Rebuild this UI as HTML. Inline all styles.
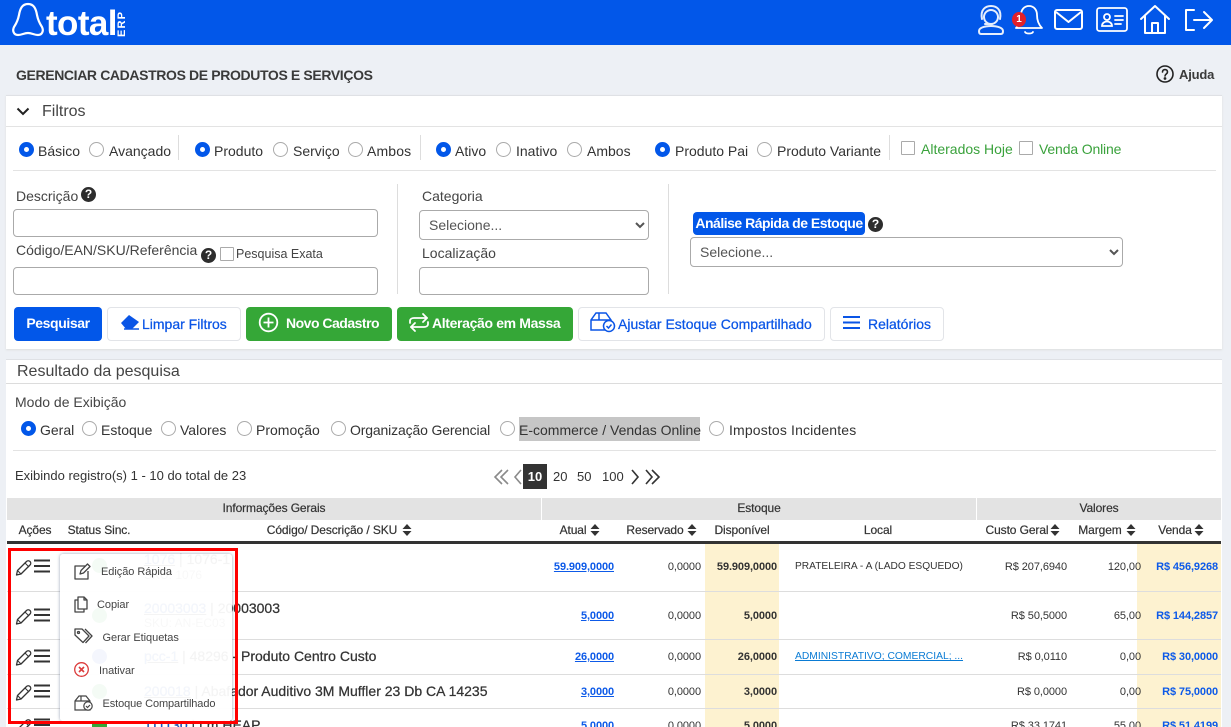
<!DOCTYPE html>
<html lang="pt-BR"><head><meta charset="utf-8"><title>Gerenciar Cadastros</title>
<style>
html,body{margin:0;padding:0;width:1231px;height:727px;overflow:hidden;background:#edf0f5;font-family:"Liberation Sans",Arial,sans-serif;color:#333;font-size:14px}
#p{position:relative;width:1231px;height:727px;overflow:hidden}
.a{position:absolute}
.t{position:absolute;white-space:nowrap;line-height:20px;height:20px}
.rt{position:absolute;white-space:nowrap;line-height:20px;height:20px;text-align:right;font-size:11px;letter-spacing:-.08px}
.c{position:absolute;white-space:nowrap;line-height:20px;height:20px;text-align:center;font-size:12px;letter-spacing:-.1px;transform:translateX(-50%);-webkit-text-stroke:.2px #333}
.r{position:absolute;width:15px;height:15px;border:1px solid #aaa;border-radius:50%;background:#fff;box-sizing:border-box}
.r.on{background:#0257e9;border-color:#0257e9}
.r.on:after{content:"";position:absolute;left:4px;top:4px;width:5px;height:5px;border-radius:50%;background:#fff}
.k{position:absolute;width:14px;height:14px;border:1px solid #aaa;border-radius:1px;background:#fff;box-sizing:border-box}
.i{position:absolute;box-sizing:border-box;border:1px solid #aaa;border-radius:4px;background:#fff;margin:0;padding:0 9px;height:28px}
select.i{font:14px "Liberation Sans",Arial,sans-serif;color:#555;padding-left:5px}
.b{position:absolute;top:307px;height:34px;box-sizing:border-box;border-radius:4px;line-height:32px;white-space:nowrap;font-size:14px;font-weight:bold;letter-spacing:-.4px}
.bl{background:#fff;border:1px solid #e2e4e8;color:#0a55e6;font-weight:normal;letter-spacing:0;-webkit-text-stroke:.25px #0a55e6}
.gr{background:#35a737;color:#fff}
.v{position:absolute;width:1px;background:#ddd}
.h{position:absolute;height:1px;background:#ddd}
.lk{color:#0d5ae8;text-decoration:underline;font-weight:bold;letter-spacing:-.1px}
.help{position:absolute;width:15px;height:15px;border-radius:50%;background:#2d2d2d;color:#fff;font:bold 12px/15px "Liberation Sans",Arial,sans-serif;text-align:center}
.yl{position:absolute;background:#fdf2d0}
svg{position:absolute;overflow:visible}
.m{position:absolute;white-space:nowrap;font-size:11px;line-height:16px;color:#444;letter-spacing:-.05px}
.code{font-size:14px;-webkit-text-stroke:.25px #333}
.code span{color:#0d5ae8;text-decoration:underline}
</style></head><body><div id="p">

<!-- Header -->
<div class="a" style="left:0;top:0;width:1231px;height:45px;background:#0257e9"></div>
<svg style="left:0;top:0" width="130" height="45" fill="none" stroke="#fff" stroke-width="2.2" stroke-linejoin="round" stroke-linecap="round">
<path d="M28 4c-6 0-8 5-9 11-1 5-3 9-5 12-2 4 0 8 4 8 4 0 6-2 10-2s6 2 10 2c4 0 6-4 4-8-2-3-4-7-5-12-1-6-3-11-9-11z"/>
</svg>
<div class="t" style="left:46px;top:12px;color:#fff;font-weight:bold;font-size:35px;line-height:24px;height:24px;letter-spacing:-.6px">total</div>
<div class="t" style="left:110px;top:19px;color:#fff;font-weight:bold;font-size:11px;line-height:12px;height:12px;transform:rotate(-90deg);width:24px;text-align:center;letter-spacing:1.2px">ERP</div>

<svg style="left:976px;top:3px" width="30" height="34" fill="none" stroke="#e6eefc" stroke-width="2" stroke-linecap="round">
<circle cx="15" cy="14" r="7"/><path d="M6 16c-2-10 4-13 9-13s11 3 9 13"/><path d="M9 21h7"/><path d="M5 31c-2 0-2-2-2-3 0-3 5-5 12-5s12 2 12 5c0 1 0 3-2 3z"/>
</svg>
<svg style="left:1014px;top:4px" width="30" height="32" fill="none" stroke="#fff" stroke-width="1.8" stroke-linecap="round" stroke-linejoin="round">
<path d="M15 2c-5 0-8 4-8 9 0 6-2 10-5 13h26c-3-3-5-7-5-13 0-5-3-9-8-9z"/><path d="M11 28c1 2 7 2 8 0"/>
</svg>
<div class="a" style="left:1012px;top:12px;width:14px;height:15px;border-radius:50%;background:#e1202a;color:#fff;font:bold 10px/15px 'Liberation Sans',sans-serif;text-align:center">1</div>
<svg style="left:1054px;top:9px" width="30" height="22" fill="none" stroke="#fff" stroke-width="2" stroke-linejoin="round">
<rect x="1" y="1" width="27" height="19" rx="2"/><path d="M2 3l12.500 10L27 3"/>
</svg>
<svg style="left:1096px;top:7px" width="33" height="26" fill="none" stroke="#fff" stroke-width="1.8" stroke-linecap="round">
<rect x="1" y="1" width="30" height="23" rx="2.500"/><circle cx="11" cy="10" r="3"/><path d="M6 19c0-6 10-6 10 0z"/><path d="M19 9h8M19 13h8M19 17h6"/>
</svg>
<svg style="left:1139px;top:4px" width="32" height="31" fill="none" stroke="#fff" stroke-width="2" stroke-linejoin="round" stroke-linecap="round">
<path d="M2 15L16 2l14 13"/><path d="M6 12v17h20V12"/><path d="M13 29V19h6v10"/>
</svg>
<svg style="left:1184px;top:8px" width="30" height="24" fill="none" stroke="#fff" stroke-width="2" stroke-linecap="round" stroke-linejoin="round">
<path d="M10 2H2v20h8"/><path d="M10 12h18M20 4l8 8-8 8"/>
</svg>

<!-- Title -->
<div class="t" style="left:16px;top:65px;font-size:14px;font-weight:bold;color:#3a3a3a;letter-spacing:-.37px">GERENCIAR CADASTROS DE PRODUTOS E SERVIÇOS</div>
<svg style="left:1156px;top:65px" width="19" height="19" fill="none" stroke="#222" stroke-width="1.600"><circle cx="9" cy="9" r="8"/><path d="M6.500 7c0-3.300 5-3.300 5 0 0 2-2.500 2-2.500 4" stroke-linecap="round"/><circle cx="9" cy="13.500" r=".6" fill="#222"/></svg>
<div class="t" style="left:1179px;top:65px;font-size:13px;font-weight:bold;color:#3a3a3a;letter-spacing:-.2px">Ajuda</div>

<!-- Filtros panel -->
<div class="a" style="left:6px;top:95px;width:1216px;height:254px;background:#fff;border-top:1px solid #dfe1e5;box-sizing:border-box;box-shadow:0 1px 2px #ddd"></div>
<div class="h" style="left:6px;top:126px;width:1216px;background:#e3e3e3"></div>
<svg style="left:16px;top:107px" width="14" height="9" fill="none" stroke="#222" stroke-width="2"><path d="M1.500 1.500L7 7l5.500-5.500"/></svg>
<div class="t" style="left:42px;top:102px;font-size:16px;color:#444">Filtros</div>

<span class="r on" style="left:19px;top:142px"></span><div class="t" style="left:38px;top:141px">Básico</div>
<span class="r" style="left:89px;top:142px"></span><div class="t" style="left:109px;top:141px">Avançado</div>
<div class="v" style="left:178px;top:135px;height:25px"></div>
<span class="r on" style="left:195px;top:142px"></span><div class="t" style="left:214px;top:141px">Produto</div>
<span class="r" style="left:273px;top:142px"></span><div class="t" style="left:293px;top:141px">Serviço</div>
<span class="r" style="left:348px;top:142px"></span><div class="t" style="left:367px;top:141px;letter-spacing:.15px">Ambos</div>
<div class="v" style="left:420px;top:135px;height:25px"></div>
<span class="r on" style="left:436px;top:142px"></span><div class="t" style="left:455px;top:141px">Ativo</div>
<span class="r" style="left:496px;top:142px"></span><div class="t" style="left:516px;top:141px">Inativo</div>
<span class="r" style="left:567px;top:142px"></span><div class="t" style="left:587px;top:141px">Ambos</div>
<span class="r on" style="left:655px;top:142px"></span><div class="t" style="left:675px;top:141px">Produto Pai</div>
<span class="r" style="left:757px;top:142px"></span><div class="t" style="left:777px;top:141px">Produto Variante</div>
<div class="v" style="left:889px;top:135px;height:25px"></div>
<span class="k" style="left:901px;top:141px"></span><div class="t" style="left:921px;top:139px;color:#3aa23c">Alterados Hoje</div>
<span class="k" style="left:1019px;top:141px"></span><div class="t" style="left:1039px;top:139px;color:#3aa23c;letter-spacing:-.15px">Venda Online</div>
<div class="h" style="left:13px;top:170px;width:1203px;background:#e3e3e3"></div>

<div class="t" style="left:16px;top:186px;color:#444">Descrição</div><span class="help" style="left:81px;top:187px">?</span>
<input class="i" style="left:13px;top:209px;width:365px">
<div class="t" style="left:16px;top:240px;color:#444">Código/EAN/SKU/Referência</div><span class="help" style="left:201px;top:248px">?</span>
<span class="k" style="left:220px;top:247px"></span><div class="t" style="left:236px;top:244px;font-size:12.500px;color:#444">Pesquisa Exata</div>
<input class="i" style="left:13px;top:267px;width:365px">
<div class="v" style="left:397px;top:184px;height:110px"></div>
<div class="t" style="left:422px;top:186px;color:#444">Categoria</div>
<select class="i" style="left:419px;top:210px;width:230px;height:30px"><option>Selecione...</option></select>
<div class="t" style="left:422px;top:243px;color:#444">Localização</div>
<input class="i" style="left:419px;top:267px;width:230px">
<div class="v" style="left:668px;top:184px;height:110px"></div>
<div class="a" style="left:693px;top:212px;width:172px;height:23px;background:#0257e9;border-radius:4px;color:#fff;font-weight:bold;font-size:14px;line-height:23px;text-align:center;letter-spacing:-.5px;white-space:nowrap">Análise Rápida de Estoque</div>
<span class="help" style="left:868px;top:217px">?</span>
<select class="i" style="left:690px;top:237px;width:433px;height:30px"><option>Selecione...</option></select>

<!-- Buttons -->
<div class="b" style="left:14px;width:88px;background:#0257e9;color:#fff;text-align:center">Pesquisar</div>
<div class="b bl" style="left:107px;width:134px;padding-left:34px">Limpar Filtros</div>
<svg style="left:120px;top:314px" width="20" height="17"><path d="M1 9l8-8 10 7-7 7H6z" fill="#0a55e6"/><path d="M4 15h15" stroke="#0a55e6" stroke-width="1.500"/></svg>
<div class="b gr" style="left:246px;width:146px;padding-left:40px;letter-spacing:-.5px">Novo Cadastro</div>
<svg style="left:258px;top:312px" width="21" height="21" fill="none" stroke="#fff" stroke-width="1.800"><circle cx="10.500" cy="10.500" r="8.800"/><path d="M10.500 5.500v10M5.500 10.500h10"/></svg>
<div class="b gr" style="left:397px;width:176px;padding-left:35px;letter-spacing:-.35px">Alteração em Massa</div>
<svg style="left:408px;top:313px" width="22" height="19" fill="none" stroke="#fff" stroke-width="1.800" stroke-linecap="round" stroke-linejoin="round"><path d="M2 10V8c0-2 2-3 4-3h13"/><path d="M15 1l4 4-4 4"/><path d="M20 9v2c0 2-2 3-4 3H3"/><path d="M7 18l-4-4 4-4"/></svg>
<div class="b bl" style="left:578px;width:247px;padding-left:39px">Ajustar Estoque Compartilhado</div>
<svg style="left:590px;top:312px" width="26" height="21" fill="none" stroke="#0a55e6" stroke-width="1.500"><path d="M1 8h20M6 1h10l5 7v10H1V8z"/><path d="M9 1v7"/><circle cx="19" cy="14" r="5.500" fill="#fff"/><path d="M16.500 14l2 2 3-3.500"/></svg>
<div class="b bl" style="left:830px;width:114px;padding-left:37px">Relatórios</div>
<svg style="left:843px;top:315px" width="18" height="15" fill="none" stroke="#0a55e6" stroke-width="2"><path d="M0 2h17M0 7.500h17M0 13h17"/></svg>

<!-- Resultados panel -->
<div class="a" style="left:6px;top:359px;width:1216px;height:368px;background:#fff;border-top:1px solid #dfe1e5;box-sizing:border-box"></div>
<div class="h" style="left:6px;top:383px;width:1216px;background:#dcdcdc"></div>
<div class="t" style="left:17px;top:362px;font-size:16px;color:#444">Resultado da pesquisa</div>
<div class="t" style="left:15px;top:392px;color:#444;font-size:14px">Modo de Exibição</div>

<span class="r on" style="left:21px;top:421px"></span><div class="t" style="left:40px;top:420px">Geral</div>
<span class="r" style="left:82px;top:421px"></span><div class="t" style="left:101px;top:420px">Estoque</div>
<span class="r" style="left:161px;top:421px"></span><div class="t" style="left:180px;top:420px">Valores</div>
<span class="r" style="left:237px;top:421px"></span><div class="t" style="left:256px;top:420px">Promoção</div>
<span class="r" style="left:331px;top:421px"></span><div class="t" style="left:350px;top:420px;letter-spacing:-.15px">Organização Gerencial</div>
<span class="r" style="left:500px;top:421px"></span>
<div class="a" style="left:519px;top:417px;width:181px;height:24px;background:#c6c6c6"></div>
<div class="t" style="left:519px;top:420px">E-commerce / Vendas Online</div>
<span class="r" style="left:709px;top:421px"></span><div class="t" style="left:729px;top:420px;letter-spacing:.15px">Impostos Incidentes</div>
<div class="h" style="left:13px;top:450px;width:1203px;background:#e3e3e3"></div>

<div class="t" style="left:15px;top:466px;font-size:13px">Exibindo registro(s) 1 - 10 do total de 23</div>
<svg style="left:494px;top:469px" width="30" height="16" fill="none" stroke="#8a8a8a" stroke-width="1.600"><path d="M8 1L1 8l7 7M14 1L7 8l7 7M27 1l-6 7 6 7"/></svg>
<div class="a" style="left:523px;top:464px;width:24px;height:25px;background:#333;color:#fff;font-size:13px;font-weight:bold;line-height:25px;text-align:center">10</div>
<div class="t" style="left:553px;top:467px;font-size:13px">20</div>
<div class="t" style="left:577px;top:467px;font-size:13px">50</div>
<div class="t" style="left:602px;top:467px;font-size:13px">100</div>
<svg style="left:631px;top:469px" width="30" height="16" fill="none" stroke="#333" stroke-width="1.600"><path d="M1 1l6 7-6 7M15 1l6 7-6 7M21 1l7 7-7 7"/></svg>

<!-- Table -->
<div class="a" style="left:7px;top:498px;width:1214px;height:22px;background:#e3e3e3"></div>
<div class="a" style="left:541px;top:498px;width:1px;height:22px;background:#fff"></div>
<div class="a" style="left:976px;top:498px;width:1px;height:22px;background:#fff"></div>
<div class="c" style="left:274px;top:498px">Informações Gerais</div>
<div class="c" style="left:759px;top:498px">Estoque</div>
<div class="c" style="left:1099px;top:498px">Valores</div>

<div class="c" style="left:35px;top:520px">Ações</div>
<div class="c" style="left:99px;top:520px">Status Sinc.</div>
<div class="c" style="left:332px;top:520px">Código/ Descrição / SKU</div>
<div class="c" style="left:573px;top:520px">Atual</div>
<div class="c" style="left:655px;top:520px">Reservado</div>
<div class="c" style="left:742px;top:520px">Disponível</div>
<div class="c" style="left:878px;top:520px">Local</div>
<div class="c" style="left:1017px;top:520px">Custo Geral</div>
<div class="c" style="left:1100px;top:520px">Margem</div>
<div class="c" style="left:1175px;top:520px">Venda</div>
<svg style="left:0;top:523px" width="1231" height="14" fill="#333">
<path d="M402 1l4.500 5h-9zM402 13l4.500-5h-9z" transform="translate(5 0)"/>
<path d="M595 1l4.500 5h-9zM595 13l4.500-5h-9z"/>
<path d="M692 1l4.500 5h-9zM692 13l4.500-5h-9z"/>
<path d="M1055 1l4.500 5h-9zM1055 13l4.500-5h-9z"/>
<path d="M1131 1l4.500 5h-9zM1131 13l4.500-5h-9z"/>
<path d="M1199 1l4.500 5h-9zM1199 13l4.500-5h-9z"/>
</svg>
<div class="a" style="left:7px;top:541px;width:1214px;height:3px;background:#333"></div>

<div class="yl" style="left:705px;top:544px;width:74px;height:183px"></div>
<div class="yl" style="left:1137px;top:544px;width:84px;height:183px"></div>
<div class="h" style="left:7px;top:591px;width:1214px"></div>
<div class="h" style="left:7px;top:639px;width:1214px"></div>
<div class="h" style="left:7px;top:674px;width:1214px"></div>
<div class="h" style="left:7px;top:708px;width:1214px"></div>

<!-- status -->
<div class="a" style="left:92px;top:558px;width:15px;height:15px;border-radius:50%;background:#35a737"></div>
<div class="a" style="left:92px;top:608px;width:15px;height:15px;border-radius:50%;background:#35a737"></div>
<div class="a" style="left:92px;top:649px;width:15px;height:15px;border-radius:50%;background:#2f55d4"></div>
<div class="a" style="left:92px;top:684px;width:15px;height:15px;border-radius:50%;background:#35a737"></div>
<div class="a" style="left:92px;top:720px;width:15px;height:7px;background:#35a737"></div>

<!-- code col -->
<div class="t code" style="left:144px;top:549px"><span>1076</span> | 1076-1</div>
<div class="t" style="left:144px;top:565px;font-size:12px;color:#777">SKU: 1076</div>
<div class="t code" style="left:144px;top:598px"><span>20003003</span> | 20003003</div>
<div class="t" style="left:144px;top:613px;font-size:12px;color:#777">SKU: AN-EC03</div>
<div class="t code" style="left:144px;top:646px"><span>pcc-1</span> | 48296 - Produto Centro Custo</div>
<div class="t code" style="left:144px;top:681px"><span>200018</span> | Abafador Auditivo 3M Muffler 23 Db CA 14235</div>
<div class="t code" style="left:144px;top:715px"><span>111130</span> | Lm HEAP</div>

<!-- numbers row 1-5 -->
<div class="rt lk" style="right:617px;top:557px">59.909,0000</div>
<div class="rt" style="right:530px;top:557px">0,0000</div>
<div class="rt" style="right:454px;top:557px;font-weight:bold;letter-spacing:-.1px">59.909,0000</div>
<div class="t" style="left:795px;top:557px;font-size:10.200px">PRATELEIRA - A (LADO ESQUEDO)</div>
<div class="rt" style="right:164px;top:557px">R$ 207,6940</div>
<div class="rt" style="right:90px;top:557px">120,00</div>
<div class="rt lk" style="right:13px;top:557px;text-decoration:none">R$ 456,9268</div>

<div class="rt lk" style="right:617px;top:606px">5,0000</div>
<div class="rt" style="right:530px;top:606px">0,0000</div>
<div class="rt" style="right:454px;top:606px;font-weight:bold">5,0000</div>
<div class="rt" style="right:164px;top:606px">R$ 50,5000</div>
<div class="rt" style="right:90px;top:606px">65,00</div>
<div class="rt lk" style="right:13px;top:606px;text-decoration:none">R$ 144,2857</div>

<div class="rt lk" style="right:617px;top:647px">26,0000</div>
<div class="rt" style="right:530px;top:647px">0,0000</div>
<div class="rt" style="right:454px;top:647px;font-weight:bold">26,0000</div>
<div class="t" style="left:795px;top:647px;font-size:10.300px;color:#0a7bd4;text-decoration:underline">ADMINISTRATIVO; COMERCIAL; ...</div>
<div class="rt" style="right:164px;top:647px">R$ 0,0110</div>
<div class="rt" style="right:90px;top:647px">0,00</div>
<div class="rt lk" style="right:13px;top:647px;text-decoration:none">R$ 30,0000</div>

<div class="rt lk" style="right:617px;top:682px">3,0000</div>
<div class="rt" style="right:530px;top:682px">0,0000</div>
<div class="rt" style="right:454px;top:682px;font-weight:bold">3,0000</div>
<div class="rt" style="right:164px;top:682px">R$ 0,0000</div>
<div class="rt" style="right:90px;top:682px">0,00</div>
<div class="rt lk" style="right:13px;top:682px;text-decoration:none">R$ 75,0000</div>

<div class="rt lk" style="right:617px;top:716px">5,0000</div>
<div class="rt" style="right:530px;top:716px">0,0000</div>
<div class="rt" style="right:454px;top:716px;font-weight:bold">5,0000</div>
<div class="rt" style="right:164px;top:716px">R$ 33,1741</div>
<div class="rt" style="right:90px;top:716px">55,00</div>
<div class="rt lk" style="right:13px;top:716px;text-decoration:none">R$ 51,4199</div>

<!-- action icons -->
<svg style="left:0;top:0" width="60" height="727" fill="none" stroke="#333" stroke-linejoin="round">
<g><path d="M16.500 575l1-4.500 9-9c1-1 2.500-1 3.500 0s1 2.500 0 3.500l-9 9z" stroke-width="1.300"/><path d="M25 563l4 4M18 571l3 3" stroke-width="1"/><path d="M34 560.500h16M34 566h16M34 571.500h16" stroke-width="2"/></g>
<g transform="translate(0 49)"><path d="M16.500 575l1-4.500 9-9c1-1 2.500-1 3.500 0s1 2.500 0 3.500l-9 9z" stroke-width="1.300"/><path d="M25 563l4 4M18 571l3 3" stroke-width="1"/><path d="M34 560.500h16M34 566h16M34 571.500h16" stroke-width="2"/></g>
<g transform="translate(0 90)"><path d="M16.500 575l1-4.500 9-9c1-1 2.500-1 3.500 0s1 2.500 0 3.500l-9 9z" stroke-width="1.300"/><path d="M25 563l4 4M18 571l3 3" stroke-width="1"/><path d="M34 560.500h16M34 566h16M34 571.500h16" stroke-width="2"/></g>
<g transform="translate(0 125)"><path d="M16.500 575l1-4.500 9-9c1-1 2.500-1 3.500 0s1 2.500 0 3.500l-9 9z" stroke-width="1.300"/><path d="M25 563l4 4M18 571l3 3" stroke-width="1"/><path d="M34 560.500h16M34 566h16M34 571.500h16" stroke-width="2"/></g>
<g transform="translate(0 159)"><path d="M16.500 575l1-4.500 9-9c1-1 2.500-1 3.500 0s1 2.500 0 3.500l-9 9z" stroke-width="1.300"/><path d="M25 563l4 4M18 571l3 3" stroke-width="1"/><path d="M34 560.500h16M34 566h16M34 571.500h16" stroke-width="2"/></g>
</svg>

<!-- Popup -->
<div class="a" style="left:60px;top:554px;width:172px;height:167px;background:rgba(255,255,255,.95);border-radius:3px;box-shadow:0 0 3px rgba(70,85,120,.55)"></div>
<svg style="left:74px;top:563px" width="20" height="17" fill="none" stroke="#444" stroke-width="1.300" stroke-linejoin="round"><path d="M11 3H1v13h13V8"/><path d="M6 11l1-3.500 6.500-6.500 2.500 2.500L9.500 10z"/></svg>
<div class="m" style="left:101px;top:564px">Edição Rápida</div>
<svg style="left:74px;top:596px" width="14" height="17" fill="none" stroke="#444" stroke-width="1.300" stroke-linejoin="round"><path d="M4 1h6l3 3v9H4z"/><path d="M4 4H1v12h9v-3"/><path d="M10 1v3h3"/></svg>
<div class="m" style="left:97px;top:597px">Copiar</div>
<svg style="left:74px;top:628px" width="19" height="17" fill="none" stroke="#444" stroke-width="1.300" stroke-linejoin="round"><path d="M1 1h7l7 7-6 6.500L1 7z"/><path d="M11 1l7 7-6.500 7"/><circle cx="4.500" cy="4.500" r="1"/></svg>
<div class="m" style="left:102.500px;top:630px">Gerar Etiquetas</div>
<svg style="left:74px;top:662px" width="16" height="16" fill="none" stroke="#dc3c3c" stroke-width="1.300"><circle cx="7.500" cy="7.500" r="6.800"/><path d="M5 5l5 5M10 5l-5 5" stroke-width="1.600"/></svg>
<div class="m" style="left:99px;top:663px">Inativar</div>
<svg style="left:74px;top:695px" width="20" height="17" fill="none" stroke="#444" stroke-width="1.200"><path d="M1 6h15M5 1h7l4 5v9H1V6z"/><path d="M7 1v5"/><circle cx="14" cy="11" r="4.200" fill="#fff"/><path d="M12 11l1.500 1.500 2.500-2.500"/></svg>
<div class="m" style="left:102.500px;top:696px;letter-spacing:-.1px">Estoque Compartilhado</div>

<!-- Red highlight -->
<div class="a" style="left:8px;top:548px;width:230px;height:176px;box-sizing:border-box;border:3px solid #f00"></div>

</div></body></html>
